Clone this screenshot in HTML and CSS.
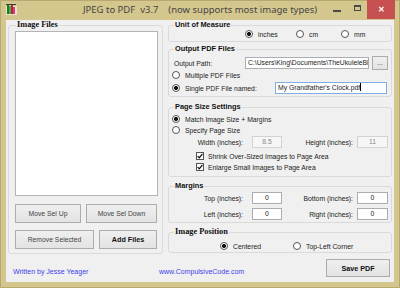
FILE: index.html
```html
<!DOCTYPE html>
<html lang="en">
<head>
    <meta charset="UTF-8">
    <title>JPEG to PDF v3.7</title>
    <link rel="stylesheet" href="styles.css">
</head>
<body>
    <div class="window">
        <div class="titlebar">
            <svg class="app-icon" width="11" height="11" viewBox="0 0 11 11">
                <rect x="0" y="2" width="11" height="9" fill="#e9e4c4"/>
                <rect x="1" y="1" width="2" height="9" fill="#1f7a2e"/>
                <rect x="3" y="2" width="2" height="8" fill="#3fb04a"/>
                <rect x="5" y="1" width="2" height="9" fill="#c8202a"/>
                <rect x="7" y="3" width="2" height="7" fill="#d2398f"/>
                <rect x="0" y="0" width="10" height="1" fill="#3b3b3b"/>
            </svg>
            <div class="title">JPEG to PDF  v3.7    (now supports most image types)</div>
            <div class="controls">
                <span class="ctl-min"></span>
                <span class="ctl-max"></span>
                <span class="ctl-close">&#x2715;</span>
            </div>
        </div>

        <div class="client">
            <div class="main">
                <fieldset class="group files">
                    <legend class="serif">Image Files</legend>
                    <div class="listbox"></div>
                    <div class="btn-row first">
                        <div class="btn">Move Sel Up</div>
                        <div class="btn">Move Sel Down</div>
                    </div>
                    <div class="btn-row second">
                        <div class="btn">Remove Selected</div>
                        <div class="btn strong">Add Files</div>
                    </div>
                </fieldset>

                <div class="right">
                    <fieldset class="group unit">
                        <legend>Unit of Measure</legend>
                        <div class="unit-options">
                            <div class="opt"><span class="radio on"></span>inches</div>
                            <div class="opt"><span class="radio"></span>cm</div>
                            <div class="opt"><span class="radio"></span>mm</div>
                        </div>
                    </fieldset>

                    <fieldset class="group output">
                        <legend>Output PDF Files</legend>
                        <div class="path-row">
                            <span>Output Path:</span>
                            <div class="field">C:\Users\King\Documents\TheUkuleleBl</div>
                            <div class="btn dots">...</div>
                        </div>
                        <div class="opt line"><span class="radio"></span>Multiple PDF Files</div>
                        <div class="single-row">
                            <div class="opt"><span class="radio on"></span>Single PDF File named:</div>
                            <div class="field focus">My Grandfather's Clock.pdf<span class="caret"></span></div>
                        </div>
                    </fieldset>

                    <fieldset class="group pagesize">
                        <legend>Page Size Settings</legend>
                        <div class="opt line first"><span class="radio on"></span>Match Image Size + Margins</div>
                        <div class="opt line"><span class="radio"></span>Specify Page Size</div>
                        <div class="num-row">
                            <span class="lbl">Width (inches):</span>
                            <div class="field num off">8.5</div>
                            <span class="lbl">Height (inches):</span>
                            <div class="field num off">11</div>
                        </div>
                        <div class="check-row first">
                            <span class="check"><svg width="6" height="6" viewBox="0 0 6 6"><path d="M0.6 3.1 L2.3 4.8 L5.4 0.9" fill="none" stroke="#111" stroke-width="1.3"/></svg></span>
                            Shrink Over-Sized Images to Page Area
                        </div>
                        <div class="check-row">
                            <span class="check"><svg width="6" height="6" viewBox="0 0 6 6"><path d="M0.6 3.1 L2.3 4.8 L5.4 0.9" fill="none" stroke="#111" stroke-width="1.3"/></svg></span>
                            Enlarge Small Images to Page Area
                        </div>
                    </fieldset>

                    <fieldset class="group margins">
                        <legend>Margins</legend>
                        <div class="num-row">
                            <span class="lbl">Top (inches):</span>
                            <div class="field num">0</div>
                            <span class="lbl">Bottom (inches):</span>
                            <div class="field num">0</div>
                        </div>
                        <div class="num-row lower">
                            <span class="lbl">Left (inches):</span>
                            <div class="field num">0</div>
                            <span class="lbl">Right (inches):</span>
                            <div class="field num">0</div>
                        </div>
                    </fieldset>

                    <fieldset class="group position">
                        <legend class="serif">Image Position</legend>
                        <div class="pos-options">
                            <div class="opt"><span class="radio on"></span>Centered</div>
                            <div class="opt"><span class="radio"></span>Top-Left Corner</div>
                        </div>
                    </fieldset>
                </div>
            </div>

            <div class="footer">
                <span class="link author">Written by Jesse Yeager</span>
                <span class="link">www.CompulsiveCode.com</span>
                <div class="btn strong save">Save PDF</div>
            </div>
        </div>
    </div>
</body>
</html>
```

FILE: styles.css
```css
* {
    box-sizing: border-box;
}
body {
    margin: 0;
    font-family: "Liberation Sans", Arial, sans-serif;
    font-size: 6.8px;
    color: #222;
}
.window {
    width: 400px;
    height: 288px;
    background: #d4c78e;
    padding: 0 6px 6px 6px;
    display: flex;
    flex-direction: column;
    box-shadow: inset 0 0 0 1px #b7a96f;
}

/* title bar */
.titlebar {
    height: 20px;
    flex: none;
    display: grid;
    grid-template-columns: 1fr auto 1fr;
    align-items: start;
}
.app-icon {
    margin-top: 4px;
}
.title {
    font-family: "Noto Sans", "Open Sans", sans-serif;
    font-size: 9.5px;
    line-height: 20px;
    color: #444;
    white-space: pre;
}
.controls {
    display: flex;
    justify-content: flex-end;
    margin-right: -1px;
}
.ctl-min {
    width: 8px;
    height: 2px;
    background: #4a4a4a;
    margin-top: 10px;
}
.ctl-max {
    width: 7px;
    height: 6px;
    border: 1px solid #4a4a4a;
    border-top-width: 2px;
    margin: 5px 6px 0 13px;
}
.ctl-close {
    width: 28px;
    height: 19px;
    background: #c75050;
    color: #fff;
    font-size: 8px;
    font-weight: bold;
    display: flex;
    align-items: center;
    justify-content: center;
}

/* client area */
.client {
    flex: 1;
    background: #f0f0f0;
    padding: 0 2px;
    display: flex;
    flex-direction: column;
}
.main {
    height: 234px;
    display: grid;
    grid-template-columns: 155px 224px;
    gap: 5px;
}
.group {
    margin: 0;
    min-width: 0;
    border: 1px solid #dadada;
    border-radius: 3px;
    padding: 0 3px 1px 3px;
}
.group legend {
    padding: 0 1px;
    margin-left: 2px;
    font-weight: bold;
    font-size: 7.4px;
    line-height: 10px;
    color: #111;
}
.group legend.serif {
    font-family: "Liberation Serif", "Times New Roman", serif;
    font-size: 8.3px;
}

/* image files */
.files {
    padding: 0 4px 4px 6px;
}
.files legend {
    margin-left: 1px;
}
.listbox {
    margin-top: 1px;
    height: 165px;
    background: #fff;
    border: 1px solid #b4b4b4;
}
.btn-row {
    display: grid;
    gap: 5px;
    margin-top: 7px;
}
.btn-row.first {
    margin-top: 8px;
    grid-template-columns: 66px 71px;
}
.btn-row.second {
    grid-template-columns: 79px 58px;
}
.btn {
    height: 19px;
    border: 1px solid #acacac;
    background: linear-gradient(#efefef, #e3e3e3);
    color: #444;
    display: flex;
    align-items: center;
    justify-content: center;
    white-space: nowrap;
}
.btn.strong {
    font-weight: bold;
    color: #111;
    font-size: 7.2px;
}

/* right column */
.right {
    display: flex;
    flex-direction: column;
}
.opt {
    display: flex;
    align-items: center;
    gap: 5px;
    white-space: nowrap;
}
.opt.line {
    height: 10px;
}
.radio {
    width: 8px;
    height: 8px;
    flex: none;
    border-radius: 50%;
    border: 1px solid #555;
    background: #fff;
}
.radio.on {
    background: radial-gradient(circle, #111 0 1.7px, #fff 2.3px);
}
.check {
    width: 8px;
    height: 8px;
    flex: none;
    border: 1px solid #555;
    background: #fff;
    display: flex;
    align-items: center;
    justify-content: center;
}
.field {
    height: 12px;
    border: 1px solid #abadb3;
    background: #fff;
    padding: 0 2px;
    line-height: 10px;
    white-space: nowrap;
    overflow: hidden;
    color: #222;
}
.field.focus {
    border-color: #7eaee0;
}
.caret {
    display: inline-block;
    width: 1px;
    height: 8px;
    background: #000;
    vertical-align: -1px;
}
.field.num {
    text-align: center;
}
.field.off {
    background: #f6f6f6;
    border-color: #d2d2d2;
    color: #8a8a8a;
}

.unit .unit-options {
    margin-top: -1px;
    height: 10px;
    display: grid;
    grid-template-columns: 51px 45px auto;
    padding-left: 73px;
}
.unit {
    padding-bottom: 2px;
}

.output {
    margin-top: 2px;
}
.path-row {
    margin-top: 2px;
    height: 14px;
    display: grid;
    grid-template-columns: 68px 124px 16px;
    gap: 3px;
    align-items: center;
    padding-left: 2px;
}
.btn.dots {
    height: 14px;
    line-height: 1;
}
.single-row {
    margin-top: 1px;
    height: 14px;
    display: grid;
    grid-template-columns: 103px 112px;
    align-items: center;
}

.pagesize {
    margin-top: 5px;
    padding-bottom: 4px;
}
.pagesize .first {
    margin-top: 2px;
}
.pagesize .line + .line {
    margin-top: 1px;
}
.num-row {
    height: 12px;
    margin-top: 1px;
    display: grid;
    grid-template-columns: 80px 30px 75px 31px;
    align-items: center;
}
.num-row .lbl {
    text-align: right;
    padding-right: 9px;
    white-space: nowrap;
}
.num-row .lbl + .field + .lbl {
    padding-right: 4px;
}
.check-row {
    height: 10px;
    margin-top: 1px;
    padding-left: 24px;
    display: flex;
    align-items: center;
    gap: 4px;
    white-space: nowrap;
}
.check-row.first {
    margin-top: 3px;
}

.margins {
    margin-top: 4px;
    padding-bottom: 2px;
}
.margins .num-row.lower {
    margin-top: 4px;
}

.position {
    margin-top: 4px;
}
.pos-options {
    margin-top: 4px;
    height: 10px;
    display: grid;
    grid-template-columns: 73px auto;
    padding-left: 48px;
}

/* footer */
.footer {
    flex: 1;
    display: flex;
    align-items: flex-end;
    padding: 5px 2px 5px 5px;
}
.link {
    color: #3d3dea;
    font-size: 7px;
    line-height: 10px;
}
.link.author {
    width: 146px;
}
.btn.save {
    margin-left: auto;
    width: 64px;
    height: 18px;
}
```
